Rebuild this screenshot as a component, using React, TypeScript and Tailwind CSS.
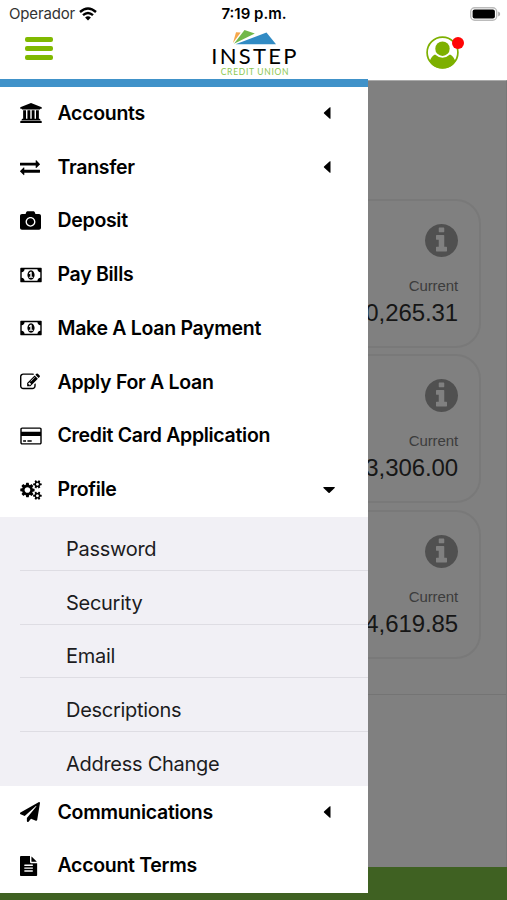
import type { ReactNode } from 'react'
import { FaCamera, FaPaperPlane } from 'react-icons/fa'

const BANK =
  'M960 0l960 384v128h-128q0 26-20.5 45t-48.5 19H197q-28 0-48.5-19T128 512H0V384zM256 640h256v768h128V640h256v768h128V640h256v768h128V640h256v768h59q28 0 48.5 19t20.5 45v64H128v-64q0-26 20.5-45t48.5-19h59V640zm1595 960q28 0 48.5 19t20.5 45v128H0v-128q0-26 20.5-45t48.5-19h1782z'
const EXCHANGE =
  'M1792 1184v192q0 13-9.5 22.5t-22.5 9.5H384v192q0 13-9.5 22.5T352 1632q-12 0-24-10L9 1302q-9-9-9-22 0-14 9-23l320-320q9-9 23-9 13 0 22.5 9.5T384 960v192h1376q13 0 22.5 9.5t9.5 22.5zm0-544q0 14-9 23l-320 320q-9 9-23 9-13 0-22.5-9.5T1408 960V768H32q-13 0-22.5-9.5T0 736V544q0-13 9.5-22.5T32 512h1376V320q0-13 9.5-22.5t22.5-9.5q12 0 24 10l319 319q9 9 9 23z'
const MONEY =
  'M768 1152h384v-96h-128V608H910L762 745l77 80q42-37 55-57h2v288H768v96zm512-256q0 70-21 142t-59.5 134-101.5 101-138 39-138-39-101.5-101-59.5-134-21-142 21-142 59.5-134T822 519t138-39 138 39 101.5 101 59.5 134 21 142zm512 256V640q-106 0-181-75t-75-181H384q0 106-75 181t-181 75v512q106 0 181 75t75 181h1152q0-106 75-181t181-75zm128-832v1152q0 26-19 45t-45 19H64q-26 0-45-19t-19-45V320q0-26 19-45t45-19h1792q26 0 45 19t19 45z'
const EDIT =
  'M888 1184l116-116-152-152-116 116v56h96v96h56zm440-720q-16-16-33 1L945 815q-17 17-1 33t33-1l350-350q17-17 1-33zm80 594v190q0 119-84.5 203.5T1120 1536H288q-119 0-203.5-84.5T0 1248V416q0-119 84.5-203.5T288 128h832q63 0 117 25 15 7 18 23 3 17-9 29l-49 49q-14 14-32 8-23-6-45-6H288q-66 0-113 47t-47 113v832q0 66 47 113t113 47h832q66 0 113-47t47-113v-126q0-13 9-22l64-64q15-15 35-7t20 29zm-96-738l288 288-672 672H640V992zm444 132l-92 92-288-288 92-92q28-28 68-28t68 28l152 152q28 28 28 68t-28 68z'
const CARD =
  'M1760 128q66 0 113 47t47 113v1216q0 66-47 113t-113 47H160q-66 0-113-47T0 1504V288q0-66 47-113t113-47h1600zM160 256q-13 0-22.5 9.5T128 288v224h1664V288q0-13-9.5-22.5T1760 256H160zm1600 1280q13 0 22.5-9.5t9.5-22.5V896H128v608q0 13 9.5 22.5t22.5 9.5h1600zM256 1408v-128h256v128H256zm384 0v-128h384v128H640z'
const COGS =
  'M896 896q0-106-75-181t-181-75-181 75-75 181 75 181 181 75 181-75 75-181zm768 512q0-52-38-90t-90-38-90 38-38 90q0 53 37.5 90.5t90.5 37.5 90.5-37.5 37.5-90.5zm0-1024q0-52-38-90t-90-38-90 38-38 90q0 53 37.5 90.5T1536 512t90.5-37.5T1664 384zm-384 421v185q0 10-7 19.5t-16 10.5l-155 24q-11 35-32 76 34 48 90 115 7 11 7 20 0 12-7 19-23 30-82.5 89.5T999 1423q-11 0-21-7l-115-90q-37 19-77 31-11 108-23 155-7 24-30 24H547q-11 0-20-7.5t-10-17.5l-23-153q-34-10-75-31l-118 89q-7 7-20 7-11 0-21-8-144-133-144-160 0-9 7-19 10-14 41-53t47-61q-23-44-35-82l-152-24q-10-1-17-9.5T0 987V802q0-10 7-19.5T23 772l155-24q11-35 32-76-34-48-90-115-7-11-7-20 0-12 7-20 22-30 82-89t79-59q11 0 21 7l115 90q34-18 77-32 11-108 23-154 7-24 30-24h186q11 0 20 7.5t10 17.5l23 153q34 10 75 31l118-89q8-7 20-7 11 0 21 8 144 133 144 160 0 8-7 19-12 16-42 54t-45 60q23 48 34 82l152 23q10 2 17 10.5t7 19.5zm640 533v140q0 16-149 31-12 27-30 52 51 113 51 138 0 4-4 7-122 71-124 71-8 0-46-47t-52-68q-20 2-30 2t-30-2q-14 21-52 68t-46 47q-2 0-124-71-4-3-4-7 0-25 51-138-18-25-30-52-149-15-149-31v-140q0-16 149-31 13-29 30-52-51-113-51-138 0-4 4-7 4-2 35-20t59-34 30-16q8 0 46 46.5t52 67.5q20-2 30-2t30 2q51-71 92-112l6-2q4 0 124 70 4 3 4 7 0 25-51 138 17 23 30 52 149 15 149 31zm0-1024v140q0 16-149 31-12 27-30 52 51 113 51 138 0 4-4 7-122 71-124 71-8 0-46-47t-52-68q-20 2-30 2t-30-2q-14 21-52 68t-46 47q-2 0-124-71-4-3-4-7 0-25 51-138-18-25-30-52-149-15-149-31V314q0-16 149-31 13-29 30-52-51-113-51-138 0-4 4-7 4-2 35-20t59-34 30-16q8 0 46 46.5t52 67.5q20-2 30-2t30 2q51-71 92-112l6-2q4 0 124 70 4 3 4 7 0 25-51 138 17 23 30 52 149 15 149 31z'
const FILE =
  'M1468 476q14 14 28 36h-472V40q22 14 36 28zm-476 164h544v1056q0 40-28 68t-68 28H96q-40 0-68-28t-28-68V96q0-40 28-68T96 0h800v544q0 40 28 68t68 28zm160 736v-64q0-14-9-23t-23-9H416q-14 0-23 9t-9 23v64q0 14 9 23t23 9h704q14 0 23-9t9-23zm0-256v-64q0-14-9-23t-23-9H416q-14 0-23 9t-9 23v64q0 14 9 23t23 9h704q14 0 23-9t9-23zm0-256v-64q0-14-9-23t-23-9H416q-14 0-23 9t-9 23v64q0 14 9 23t23 9h704q14 0 23-9t9-23z'
const INFO =
  'M1152 1376v-160q0-14-9-23t-23-9h-96V672q0-14-9-23t-23-9H672q-14 0-23 9t-9 23v160q0 14 9 23t23 9h96v320h-96q-14 0-23 9t-9 23v160q0 14 9 23t23 9h448q14 0 23-9t9-23zm-128-896V320q0-14-9-23t-23-9H800q-14 0-23 9t-9 23v160q0 14 9 23t23 9h192q14 0 23-9t9-23zm640 416q0 209-103 385.5T1281.5 1561 896 1664t-385.5-103T231 1281.5 128 896t103-385.5T510.5 231 896 128t385.5 103T1561 510.5 1664 896z'

function Glyph({ d, wide }: { d: string; wide?: boolean }) {
  return (
    <svg viewBox={wide ? '0 0 1920 1792' : '0 0 1792 1792'} className={wide ? 'h-5 w-[22px]' : 'h-5 w-5'} fill="currentColor" aria-hidden>
      <path d={d} />
    </svg>
  )
}

interface MenuItem {
  label: string
  icon: ReactNode
  caret?: 'left' | 'down'
  children?: string[]
}

const MENU: MenuItem[] = [
  { label: 'Accounts', icon: <Glyph d={BANK} wide />, caret: 'left' },
  { label: 'Transfer', icon: <Glyph d={EXCHANGE} />, caret: 'left' },
  { label: 'Deposit', icon: <FaCamera size={21} /> },
  { label: 'Pay Bills', icon: <Glyph d={MONEY} wide /> },
  { label: 'Make A Loan Payment', icon: <Glyph d={MONEY} wide /> },
  { label: 'Apply For A Loan', icon: <Glyph d={EDIT} /> },
  { label: 'Credit Card Application', icon: <Glyph d={CARD} wide /> },
  {
    label: 'Profile',
    icon: <Glyph d={COGS} wide />,
    caret: 'down',
    children: ['Password', 'Security', 'Email', 'Descriptions', 'Address Change'],
  },
  { label: 'Communications', icon: <FaPaperPlane size={20} />, caret: 'left' },
  { label: 'Account Terms', icon: <Glyph d={FILE} /> },
]

const BALANCES = ['$10,265.31', '$23,306.00', '$14,619.85']

function Caret({ dir }: { dir: 'left' | 'down' }) {
  return (
    <svg viewBox="0 0 12 12" className="mr-[33px] size-3" fill="currentColor" aria-hidden>
      {dir === 'left' ? (
        <path d="M7.5 .2v11.6Q7 12 6.5 11.5L1 6.5Q.6 6 1 5.5L6.5 .5Q7 0 7.5 .2z" />
      ) : (
        <path d="M.7 3h10.8q.6 .4 .1 1L6.7 8.800q-.6 .5-1.200 0L.5 4Q.1 3.400 .7 3z" />
      )}
    </svg>
  )
}

function StatusBar() {
  return (
    <div className="grid h-7 grid-cols-3 items-center pr-[6px] pl-[9px]">
      <div className="flex items-center gap-1 text-[15px] tracking-[-.15px] text-[#333]">
        <span>Operador</span>
        <svg viewBox="0 0 18 14" className="h-[14px] w-[18px] text-black" fill="none" stroke="currentColor" strokeWidth="2.4" aria-hidden>
          <path d="M1 5Q9-2 17 5M4 8.100Q9 3.700 14 8.100" />
          <path d="M6.100 10.500Q9 8 11.900 10.500L9 13.500z" fill="currentColor" stroke="none" />
        </svg>
      </div>
      <span className="pr-[2px] text-center text-[15px] font-semibold">7:19 p.m.</span>
      <svg viewBox="0 0 31 14" className="h-[14px] w-[31px] justify-self-end" aria-hidden>
        <rect x=".7" y=".7" width="26" height="12.6" rx="4" fill="#fff" stroke="#bbb" strokeWidth="1.4" />
        <rect x="2.6" y="2.5" width="22.3" height="9" rx="2" fill="#000" />
        <path d="M28.200 4.500q2 .6 2 2.500t-2 2.500z" fill="#aaa" />
      </svg>
    </div>
  )
}

function Logo() {
  return (
    <div className="flex w-[88px] flex-col items-center">
      <svg viewBox="0 0 44 15" className="h-[15px] w-11" aria-hidden>
        <path d="M4 2.300L8.700 2.600L1 13z" fill="#f5a74b" />
        <path d="M12.500 0L22.800 3.500L2 13.800z" fill="#72b84a" />
        <path d="M3.500 14.200L34.500 2.500L44 14.200z" fill="#318bc4" />
      </svg>
      <span className="mt-[1px] -mr-[3px] font-[Lato,sans-serif] text-[22px] leading-[20px] tracking-[2.3px] whitespace-nowrap">INSTEP</span>
      <span className="mt-[2px] ml-[3px] font-[Lato,sans-serif] text-[8.5px] leading-[9px] tracking-[.7px] whitespace-nowrap text-[#8cc750]">CREDIT UNION</span>
    </div>
  )
}

function Header() {
  return (
    <header className="h-[80px] bg-white">
      <StatusBar />
      <div className="grid grid-cols-[1fr_88px_1fr] items-start">
        <div className="mt-[9px] ml-[25px] flex w-7 flex-col gap-[4px]">
          {[0, 1, 2].map((i) => (
            <span key={i} className="h-[5px] rounded-[2px] bg-[#80b900]" />
          ))}
        </div>
        <div className="mt-[2px]">
          <Logo />
        </div>
        <svg viewBox="0 0 38 34" className="mt-[8px] mr-[43px] h-[34px] w-[38px] justify-self-end" aria-hidden>
          <circle cx="16.500" cy="16.500" r="15.400" fill="#fff" stroke="#7db000" strokeWidth="1.700" />
          <circle cx="16.500" cy="12.700" r="7.200" fill="#7db000" />
          <path d="M3.500 25.500Q5.500 20 9 18.500Q16.500 25 24 18.500Q27.500 20 29.500 25.500Q25 32.500 16.500 32.500T3.500 25.500z" fill="#7db000" />
          <circle cx="32" cy="7" r="6" fill="#ff0505" />
        </svg>
      </div>
    </header>
  )
}

function SubMenu({ items }: { items: string[] }) {
  return (
    <ul className="bg-[#f1f0f5] pl-5">
      {items.map((label, i) => (
        <li
          key={label}
          className={`flex h-[53.75px] items-center pt-[11px] pl-[46px] text-[20px] tracking-[-.28px] text-[#1c1c1e] ${i < items.length - 1 ? 'border-b border-[#dedde3]' : ''}`}
        >
          {label}
        </li>
      ))}
    </ul>
  )
}

export default function App() {
  return (
    <div className="relative flex h-[900px] w-[507px] flex-col overflow-hidden bg-[#808080] font-[Inter,sans-serif] text-black">
      <Header />

      <main className="flex flex-1 flex-col border-t border-r border-t-[#aaa] border-r-[#777] font-['Liberation_Sans',sans-serif]">
        <section className="flex h-[614px] flex-col gap-[6.5px] border-b border-[#747474] pt-[117.5px] pr-[25px] pl-[26px]">
          {BALANCES.map((amount) => (
            <article key={amount} className="flex h-[149px] shrink-0 flex-col items-end rounded-[25px] border-2 border-[#797979] pt-[23px] pr-[21px]">
              <svg viewBox="128 128 1536 1536" className="size-[33px] text-[#505050]" fill="currentColor" aria-hidden>
                <path d={INFO} />
              </svg>
              <span className="mt-[19px] text-[15px] leading-[20px] tracking-[-.1px] text-[#3c3c3c]">Current</span>
              <span className="mt-[3px] text-[24px] leading-[28px] tracking-[-.1px] text-[#161616]">{amount}</span>
            </article>
          ))}
        </section>
      </main>
      <footer className="h-[33px] bg-[#3f6122]" />

      {/* slide-out drawer over the dimmed accounts page */}
      <nav className="absolute top-[79px] left-0 h-[814px] w-[368px] border-t-8 border-[#4092c9] bg-white">
        {MENU.map((item) => (
          <div key={item.label}>
            <div className="flex h-[53.75px] items-center pb-px">
              <span className="ml-5 flex w-[37.5px] shrink-0 items-center">{item.icon}</span>
              <span className="flex-1 text-[19.5px] font-semibold tracking-[-.3px] whitespace-nowrap">{item.label}</span>
              {item.caret && <Caret dir={item.caret} />}
            </div>
            {item.children && <SubMenu items={item.children} />}
          </div>
        ))}
      </nav>
    </div>
  )
}
